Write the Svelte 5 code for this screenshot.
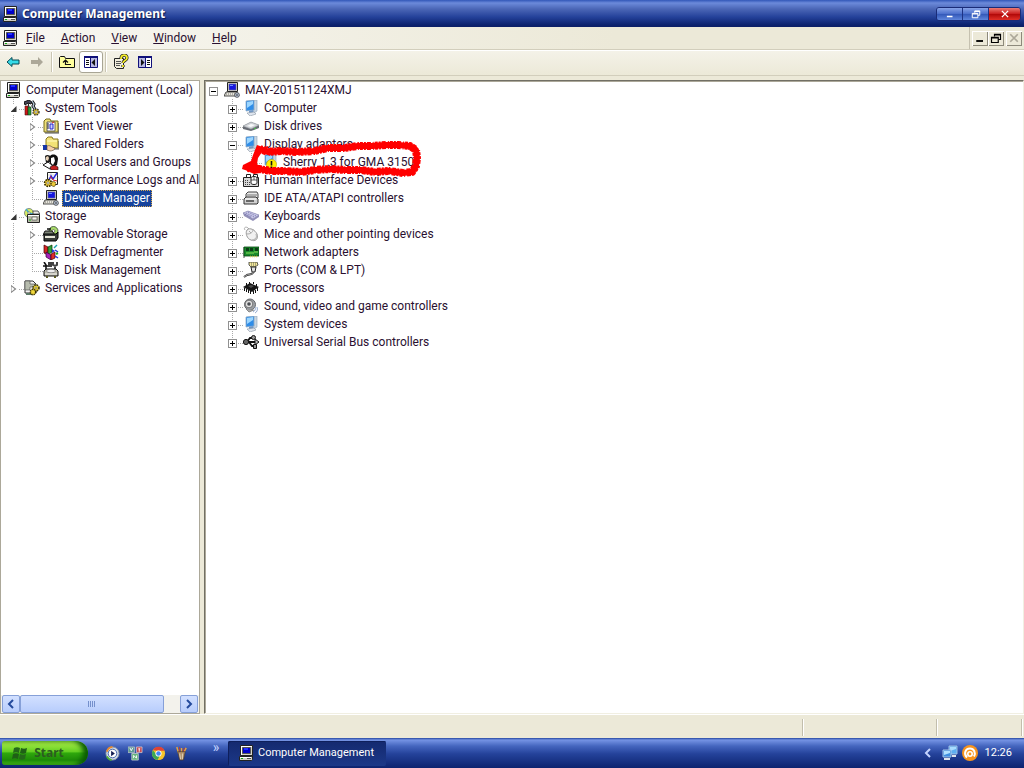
<script>
    const menus = ['File', 'Action', 'View', 'Window', 'Help']

    // guides: one letter per cell. t = branch, l = last branch, v = pass through, space = empty
    const consoleTree = [
        { guides: '', icon: 'pc', label: 'Computer Management (Local)' },
        { guides: 't', toggle: 'open', icon: 'tools', label: 'System Tools' },
        { guides: 'vt', toggle: 'shut', icon: 'event', label: 'Event Viewer' },
        { guides: 'vt', toggle: 'shut', icon: 'folder', label: 'Shared Folders' },
        { guides: 'vt', toggle: 'shut', icon: 'users', label: 'Local Users and Groups' },
        { guides: 'vt', toggle: 'shut', icon: 'perf', label: 'Performance Logs and Al' },
        { guides: 'vl', icon: 'laptop', label: 'Device Manager' },
        { guides: 't', toggle: 'open', icon: 'storage', label: 'Storage' },
        { guides: 'vt', toggle: 'shut', icon: 'removable', label: 'Removable Storage' },
        { guides: 'vt', icon: 'defrag', label: 'Disk Defragmenter' },
        { guides: 'vl', icon: 'diskman', label: 'Disk Management' },
        { guides: 'l', toggle: 'shut', icon: 'services', label: 'Services and Applications' }
    ]

    const deviceTree = [
        { guides: ' ', toggle: 'open', icon: 'laptop', label: 'MAY-20151124XMJ' },
        { guides: ' t', toggle: 'shut', icon: 'monitor', label: 'Computer' },
        { guides: ' t', toggle: 'shut', icon: 'disk', label: 'Disk drives' },
        { guides: ' t', toggle: 'open', icon: 'monitor', label: 'Display adapters' },
        { guides: ' vl', icon: 'warning', label: 'Sherry 1.3 for GMA 3150', marked: true },
        { guides: ' t', toggle: 'shut', icon: 'hid', label: 'Human Interface Devices' },
        { guides: ' t', toggle: 'shut', icon: 'ide', label: 'IDE ATA/ATAPI controllers' },
        { guides: ' t', toggle: 'shut', icon: 'keyboard', label: 'Keyboards' },
        { guides: ' t', toggle: 'shut', icon: 'mouse', label: 'Mice and other pointing devices' },
        { guides: ' t', toggle: 'shut', icon: 'network', label: 'Network adapters' },
        { guides: ' t', toggle: 'shut', icon: 'port', label: 'Ports (COM & LPT)' },
        { guides: ' t', toggle: 'shut', icon: 'cpu', label: 'Processors' },
        { guides: ' t', toggle: 'shut', icon: 'sound', label: 'Sound, video and game controllers' },
        { guides: ' t', toggle: 'shut', icon: 'monitor', label: 'System devices' },
        { guides: ' l', toggle: 'shut', icon: 'usb', label: 'Universal Serial Bus controllers' }
    ]

    const scribble = 'M260 149l8 3 14-1 16 1 16-1 14-3 16 0 14-2 14 0 14-1 12 0 12 1 6 4 1 8-1 8-4 6-9 1-14-2-14 1-14-2-16 0-14-1-16 1-14 2-16-1-14 0-12-2-12-1'

    let selected = $state('Device Manager')
</script>

{#snippet icon(name)}
    <svg class="icon" viewBox="0 0 16 16" aria-hidden="true">
        {#if name === 'pc'}
            <path d="M2.500 .5h12v10h-12z" fill="#d8d5c8" stroke="#222" />
            <path d="M3 1h11v1H4v8H3z" fill="#fff" />
            <path d="M4.500 2.500h8v6h-8z" fill="#0000c8" stroke="#555" />
            <path d="M6 3h4v2H6z" fill="#2030ff" />
            <path d="M1.500 11.500h12l1-1v4l-1 1h-12z" fill="#d0cec4" stroke="#222" />
            <path d="M2 12.500h11" stroke="#fff" />
            <path d="M9 13.500h4" stroke="#555" />
            <path d="M3 13.500h2" stroke="#1a1" />
        {:else if name === 'laptop'}
            <path d="M3.500 .5h10v9h-10z" fill="#d8d5c8" stroke="#222" />
            <path d="M5 2h7v6H5z" fill="#1616e0" stroke="#669" stroke-width=".6" />
            <path d="M6 3h3v1H6z" fill="#6a8cff" />
            <path d="M2 10h11l2 4H0z" fill="#e8e6dc" stroke="#222" stroke-width=".8" />
            <path d="M2 12h9" stroke="#777" stroke-dasharray="1 1" />
            <circle cx="13" cy="13" r="2.4" fill="#b8c4d8" stroke="#333" stroke-width=".7" />
            <path d="M12 13h2" stroke="#333" />
        {:else if name === 'tools'}
            <path d="M1 6h3v9H1z" fill="#d01818" stroke="#411" stroke-width=".6" />
            <path d="M4 7h3v8H4z" fill="#2a9a3a" stroke="#131" stroke-width=".6" />
            <path d="M0 2l5-2 3 2-1 2-3-1-3 2zM4 3l1 4" fill="#445" stroke="#111" />
            <path d="M8 1l2 3-1 2 3 5" fill="none" stroke="#111" stroke-width="3" />
            <path d="M8 1l2 3-1 2 3 5" fill="none" stroke="#bcd" stroke-width="1.2" />
            <circle cx="12" cy="12" r="3" fill="#e5c52a" stroke="#333" stroke-width="1.4" stroke-dasharray="1.5 1" />
            <circle cx="12" cy="12" r="1.2" fill="#fff" stroke="#333" stroke-width=".5" />
        {:else if name === 'event'}
            <path d="M1 3l2-2h4l1 2h7v11H1z" fill="#eee07a" stroke="#756a18" />
            <path d="M4 4h8v9H4z" fill="#fff" stroke="#444" stroke-width=".8" />
            <path d="M4 6h2M4 8h2M4 10h2" stroke="#223" />
            <path d="M7 6h3v5H7z" fill="#ccd2ff" stroke="#22c" />
            <path d="M9 5l2-1" stroke="#d22" />
            <path d="M2 15h14V5" fill="none" stroke="#222" stroke-width=".8" />
        {:else if name === 'folder'}
            <path d="M3 3l2-2h4l1 2h5v9H3z" fill="#f2e276" stroke="#8a7a20" />
            <path d="M4 5h10" stroke="#fffbc0" />
            <path d="M5 13h11V5" fill="none" stroke="#333" stroke-width=".8" />
            <path d="M0 9h4v5H0z" fill="#1434a8" />
            <path d="M4 10c2-1 4 0 5 1l3 1c0 2-3 3-5 3l-3-1z" fill="#f6d0a8" stroke="#543" stroke-width=".6" />
        {:else if name === 'users'}
            <path d="M2 2c2-2 5-1 6 1l-1 5-4 1z" fill="#1c1c1c" />
            <path d="M3 3l2-1 1 2-1 3-2-1z" fill="#e8d2b8" />
            <path d="M7 2c3-3 8-1 8 3l-1 6-3 2-4-3z" fill="#101010" />
            <path d="M8 4l3-1 1 4-2 4-2-2z" fill="#fff" />
            <path d="M0 11l5-3 4 3 1 3-3 1z" fill="#fff" stroke="#111" />
            <path d="M7 13l4-2 4 2v3H8z" fill="#c52222" stroke="#111" stroke-width=".6" />
        {:else if name === 'perf'}
            <path d="M4.500 .5h10v12h-10z" fill="#fff" stroke="#222" />
            <path d="M5 3h10M5 6h10M8 1v12" stroke="#aaa" stroke-width=".5" />
            <path d="M6 8l2-4 2 3 4-6" fill="none" stroke="#2222dd" stroke-width="1.4" />
            <path d="M7 4l3 4 4 1" fill="none" stroke="#d22" />
            <circle cx="5" cy="11" r="3.4" fill="#ecc93a" stroke="#332a00" stroke-width="1.6" stroke-dasharray="1.6 1" />
            <circle cx="10.500" cy="12" r="2.400" fill="#ecc93a" stroke="#332a00" stroke-dasharray="1.4 .8" />
            <circle cx="5" cy="11" r="1.2" fill="#fff" stroke="#332a00" stroke-width=".5" />
        {:else if name === 'storage'}
            <circle cx="5" cy="5" r="4.5" fill="#d9ec62" stroke="#567" stroke-width=".7" />
            <path d="M5 5L2 1M5 5l4 1" stroke="#40a8c8" stroke-width="1.5" />
            <circle cx="5" cy="5" r="1.2" fill="#fff" stroke="#444" stroke-width=".5" />
            <path d="M9 3h5l2 3H9z" fill="#eee" stroke="#333" stroke-width=".8" />
            <path d="M3.500 6.500h12v8h-12z" fill="#b6b5a8" stroke="#222" />
            <path d="M4 7.500h11" stroke="#fff" />
            <path d="M8 9h5v3H8z" fill="#f4f4ec" stroke="#444" stroke-width=".6" />
            <path d="M5 12h2" stroke="#1b1" />
        {:else if name === 'removable'}
            <circle cx="10.500" cy="5" r="4.500" fill="#a8db6a" stroke="#343" stroke-width=".8" />
            <circle cx="10.500" cy="5" r="1.400" fill="#fff" stroke="#333" stroke-width=".6" />
            <path d="M2 5h7l3 4H0z" fill="#7e8578" stroke="#111" />
            <path d="M1 8h12l2-2v6l-2 3H1z" fill="#3b3e3b" stroke="#000" />
            <path d="M2 10h10v2H2z" fill="#e8e8da" />
            <path d="M4 3h4" stroke="#111" stroke-width="1.5" />
        {:else if name === 'defrag'}
            <path d="M1 1l4 2v8l-4-2z" fill="#d62424" stroke="#400" stroke-width=".7" />
            <path d="M5 3l4-2v7L5 11z" fill="#34a03a" stroke="#030" stroke-width=".7" />
            <path d="M3 8l5 3v5l-5-3z" fill="#a422b8" stroke="#303" stroke-width=".7" />
            <path d="M8 10l4-2v6l-4 2z" fill="#e02c2c" stroke="#400" stroke-width=".7" />
            <path d="M9 5l3 2-3 2z" fill="#2434d8" />
            <path d="M11 4l3-3" stroke="#1aa2b0" stroke-width="1.5" />
            <path d="M12 6l3 2M12 12l3 2" stroke="#2434d8" stroke-width="1.5" />
            <path d="M13 10l2-1" stroke="#2a2" stroke-width="2" />
        {:else if name === 'diskman'}
            <path d="M1 0l2 3v4M0 4h5M6 0v5M8 0v5" fill="none" stroke="#111" stroke-width="1.600" />
            <path d="M10 0v3l2 1 2-1V0M12 4v4" fill="none" stroke="#444" stroke-width="2" />
            <path d="M3 7h10l2 2v5H1V9z" fill="#b9b8aa" stroke="#111" />
            <ellipse cx="8" cy="9" rx="4.500" ry="1.800" fill="#eee" stroke="#555" stroke-width=".6" />
            <path d="M2 12h12" stroke="#f4f4f0" />
            <path d="M3 14h2v2H3zM11 14h2v2h-2z" fill="#5a5a20" />
        {:else if name === 'services'}
            <path d="M1 1h8l3 3v9H1z" fill="#f4f4f4" stroke="#333" />
            <path d="M1 1h5v3h5v3H6v3H1z" fill="#b7bcae" stroke="#444" stroke-width=".6" />
            <path d="M2 13h6v2H2z" fill="#5c7a68" />
            <circle cx="12" cy="8" r="3" fill="#f2d93c" stroke="#3d3400" stroke-width="1.600" stroke-dasharray="1.500 .9" />
            <circle cx="9" cy="12" r="2.700" fill="#f2d93c" stroke="#3d3400" stroke-width="1.500" stroke-dasharray="1.400 .8" />
            <circle cx="12" cy="8" r="1" fill="#fff" stroke="#3d3400" stroke-width=".5" />
        {:else if name === 'monitor' || name === 'warning'}
            <path d="M10 1l4-1v11l-3 2z" fill="#c9d6e2" stroke="#8fa3b6" stroke-width=".6" />
            <path d="M3 1l8-1v10l-8 1z" fill="#2f8de8" stroke="#8ea8c4" stroke-width=".8" />
            <path d="M4 2l6-1v3L4 8z" fill="#9cd6ff" />
            <path d="M6 11l4-1 1 3H6z" fill="#6f98c8" />
            <path d="M4 13l7-1 2 2-6 2z" fill="#dfe5ee" stroke="#8b97a5" stroke-width=".6" />
            {#if name === 'warning'}
                <circle cx="9.500" cy="10.500" r="5" fill="#ffee00" stroke="#c8b400" stroke-width=".7" />
                <path d="M9.500 7v4.500M9.500 12.500v1.500" stroke="#111" stroke-width="1.600" />
            {/if}
        {:else if name === 'disk'}
            <path d="M0 8l8-4 8 3v3l-8 3-8-2z" fill="#686c74" />
            <path d="M0 8l8-4 8 3-8 4z" fill="#d0d3d7" stroke="#9a9fa5" stroke-width=".6" />
            <path d="M4 8l4-2 4 1-4 2z" fill="#f9fafb" />
            <path d="M11 11l2-1" stroke="#42cc42" />
        {:else if name === 'hid'}
            <path d="M.5 5.500h15v9H.5z" fill="#d8d8d8" stroke="#222" />
            <path d="M2 8.500h4M2 10.500h5M2 12.500h5" stroke="#444" stroke-dasharray="1 1" />
            <path d="M3.500 6V2.500h4V5" fill="none" stroke="#222" />
            <path d="M8 6c0-2 6-2 6 0v5c0 2-6 2-6 0z" fill="#fff" stroke="#222" />
            <path d="M8 8h6M11 5v3" stroke="#222" stroke-width=".7" />
            <path d="M10.500 4V2.500h4V6" fill="none" stroke="#222" />
        {:else if name === 'ide'}
            <path d="M3 4l2-2h9l1 2v4H3z" fill="#e7e7e7" stroke="#444" />
            <path d="M4 5h10" stroke="#777" />
            <path d="M1 9l2-2h10l2 2v4l-1 1H1z" fill="#d0d0d0" stroke="#333" />
            <path d="M2 9h11" stroke="#fff" />
            <path d="M3 11h8" stroke="#444" stroke-width="1.500" />
        {:else if name === 'keyboard'}
            <path d="M0 5l5-2 11 4v2l-6 4-9-5z" fill="#9290b8" />
            <path d="M0 5l5-2 11 4-6 4z" fill="#c9c8e8" stroke="#8886b0" stroke-width=".6" />
            <path d="M3 5l8 4M5 4l8 4M2 6l6 3" stroke="#7674ac" stroke-dasharray="1 1" />
        {:else if name === 'mouse'}
            <path d="M2 4C0 1 4 0 6 3" fill="none" stroke="#aaa" />
            <path d="M4 4c3-3 8 0 10 4 2 5-2 8-6 6-4-1-6-7-4-10z" fill="#f1f1f1" stroke="#999" />
            <path d="M4 8c3 0 6-1 6-5M6 5l2 2" fill="none" stroke="#aaa" />
            <path d="M13 8c2 4-1 6-4 6" fill="none" stroke="#bbb" stroke-width="1.500" />
        {:else if name === 'network'}
            <path d="M1 3v11" stroke="#888" stroke-width="1.500" />
            <path d="M1 3h15v9H1z" fill="#1a8a2c" stroke="#064410" stroke-width=".8" />
            <path d="M3 4h3v3H3zM7 4h3v3H7zM12 4h3v3h-3z" fill="#0b3d16" />
            <path d="M3 9h8M11 8h4" stroke="#8be05a" />
            <path d="M7 12.500h8" stroke="#d4c84a" stroke-width="1.500" stroke-dasharray="1 1" />
        {:else if name === 'port'}
            <path d="M6 0h8l1 3-3 2H8L6 3z" fill="#f4e99a" stroke="#333" stroke-width=".8" />
            <path d="M8 1h5M8 3h5" stroke="#665" stroke-dasharray="1 1" />
            <path d="M8 5h5l-1 5H9z" fill="#e2e2e2" stroke="#222" />
            <path d="M10 10c0 3-4 2-6 3l-3 2" fill="none" stroke="#222" stroke-width="2" />
            <path d="M10 10c0 3-4 2-6 3l-3 2" fill="none" stroke="#ddd" stroke-width=".7" />
        {:else if name === 'cpu'}
            <path d="M0 7l7-4 9 4-7 5z" fill="#161616" />
            <path d="M1.500 8v3M3.500 9v3M5.500 10v3M7.500 11v3M10.500 11v3M12.500 10v3M14.500 8v3M3.500 3v3M6.500 2v2M10.500 2v2M13.500 4v2" stroke="#111" />
            <path d="M5 6l3-1 3 1-3 2z" fill="#4b4b4b" />
        {:else if name === 'sound'}
            <circle cx="7" cy="6.500" r="5.500" fill="#9c9fa3" stroke="#66686c" />
            <path d="M3 11l3 3 5-2" fill="#aaa" stroke="#777" stroke-width=".8" />
            <circle cx="6" cy="6" r="3.800" fill="#e2e2e2" stroke="#555" stroke-width=".7" />
            <circle cx="6" cy="6" r="1.800" fill="#4a4d52" />
            <path d="M12 9c1 2 0 4-2 5M14 9c1 3 0 5-2 6" fill="none" stroke="#91a9cf" />
        {:else if name === 'usb'}
            <path d="M2 8h11M4 8l3-4h3M6 8l3 4h3" fill="none" stroke="#111" stroke-width="1.800" />
            <circle cx="3" cy="8" r="2.600" fill="#666" stroke="#111" />
            <path d="M12 5l4 3-4 3z" fill="#bbb" stroke="#111" />
            <circle cx="10.500" cy="3.500" r="2" fill="#999" stroke="#111" />
            <path d="M10.500 10.500h3v4h-3z" fill="#999" stroke="#111" />
        {:else if name === 'back'}
            <path d="M2 8l5-4.500V6h7v4H7v2.500z" fill="#35dbe8" stroke="#064a54" />
        {:else if name === 'forward'}
            <path d="M14 8L9 3v3H2v4h7v3z" fill="#aca899" />
        {:else if name === 'up'}
            <path d="M.5 3.500l1-1h4l1 2h9v9H.5z" fill="#ffff9c" stroke="#111" />
            <path d="M6.500 11V7M4 8.500L6.500 6 9 8.500M6 10.500h6" fill="none" stroke="#111" stroke-width="1.200" />
        {:else if name === 'treeview' || name === 'actions'}
            <path d="M1.500 3.500h13v10h-13z" fill="#fff" stroke="#10107a" />
            <path d="M1 3h14" stroke="#10107a" stroke-width="2" />
            {#if name === 'treeview'}
                <path d="M8 4h6v9H8z" fill="#b9b9e2" />
                <path d="M7.500 4v10" stroke="#10107a" />
                <path d="M3 6.500h3M3 8.500h3M3 10.500h3" stroke="#111" />
                <path d="M12 5v7L8.500 8.500z" fill="#111" />
            {:else}
                <path d="M2 4h6v9H2z" fill="#b9b9e2" />
                <path d="M8.500 4v10" stroke="#10107a" />
                <path d="M10 6.500h3M10 8.500h3M10 10.500h3" stroke="#111" />
                <path d="M4 5v7l3.500-3.500z" fill="#111" />
            {/if}
        {:else if name === 'help'}
            <path d="M1.500 4.500h9v10h-7l-2-2z" fill="#f1eddc" stroke="#222" />
            <path d="M3 7.500h5M3 9.500h5M3 11.500h4" stroke="#555" />
            <path d="M8 5c0-5 6-5 6-1 0 3-4 2-4 5M10 11v2" fill="none" stroke="#222" stroke-width="3.200" />
            <path d="M8 5c0-5 6-5 6-1 0 3-4 2-4 5M10 11v2" fill="none" stroke="#f6ee28" stroke-width="1.800" />
        {:else if name === 'player'}
            <circle cx="8" cy="8" r="7" fill="#d5dce6" stroke="#8391a8" />
            <path d="M2 6a7 7 0 0 1 6-5" fill="none" stroke="#e8892c" stroke-width="2" />
            <path d="M2 11a7 7 0 0 0 5 4" fill="none" stroke="#4fae3a" stroke-width="2" />
            <circle cx="8" cy="8" r="4.600" fill="#fff" stroke="#3a5fa8" />
            <path d="M6.500 5l4 3-4 3z" fill="#111c50" />
        {:else if name === 'keys'}
            <path d="M0 1h7v6H0z" fill="#5d9a96" stroke="#ccc" stroke-width=".7" />
            <path d="M9 1h6v6H9z" fill="#c94a52" stroke="#ddd" stroke-width=".7" />
            <path d="M4 8h7v7H4z" fill="#65b47c" stroke="#ddd" stroke-width=".7" />
            <path d="M2 2l1.500 3L5 2M11 3h2M12 3v3M6 13v-3l3 3v-3" fill="none" stroke="#fff" />
        {:else if name === 'chrome'}
            <circle cx="8" cy="8" r="7" fill="#f6c52b" />
            <path d="M2 4.500A7 7 0 0 1 14.500 5H8z" fill="#df4335" />
            <path d="M2 4.500A7 7 0 0 0 7 15l3-6-5-1z" fill="#3ba757" />
            <circle cx="8" cy="8" r="3.300" fill="#fff" />
            <circle cx="8" cy="8" r="2.400" fill="#4285f4" />
        {:else if name === 'brushes'}
            <path d="M5 8L3 1M8 8V2M10 8l3-6" stroke="#e7a33b" stroke-width="1.600" />
            <path d="M6 8V1M9 8l2-6" stroke="#c53b2a" />
            <path d="M4 6h8l-2 9H6z" fill="#b0916c" stroke="#4a3a2c" stroke-width=".7" />
            <path d="M6 8l1 6M9 8v6" stroke="#e0d2ba" />
        {:else if name === 'lan'}
            <path d="M7 1h8v8H7z" fill="#5daef0" stroke="#9fc0e4" />
            <path d="M8 2h6v2L8 6z" fill="#a8dcff" />
            <path d="M1 5h8v7H1z" fill="#3f8fe0" stroke="#a5c5e8" />
            <path d="M2 6h6v2l-6 2z" fill="#b2e2ff" />
            <path d="M2 13h6v2H2zM10 10h4v2h-4z" fill="#dfe4ec" />
        {:else if name === 'avast'}
            <circle cx="8" cy="8" r="8" fill="#f7941d" />
            <path d="M5 12.500C1.500 9 3 3.500 8 3.500c4 0 6 4 4 8" fill="none" stroke="#fff" stroke-width="2" />
            <circle cx="8" cy="9" r="2.200" fill="#f7941d" stroke="#fff" stroke-width="1.600" />
        {:else if name === 'flag'}
            <path d="M2 3c2-1 4-1 6 0L7 8C5 7 3 7 1 8z" fill="#24691a" />
            <path d="M9 3c2 1 4 1 6 0l-1 5c-2 1-4 1-6 0z" fill="#1f6016" />
            <path d="M1 9c2-1 4-1 6 0l-1 5c-2-1-4-1-6 0z" fill="#1f6016" />
            <path d="M8 9c2 1 4 1 6 0l-1 5c-2 1-4 1-6 0z" fill="#24691a" />
        {:else if name === 'minimize'}
            <path d="M3 12h9" stroke="currentColor" stroke-width="2.500" />
        {:else if name === 'restore'}
            <path d="M6 6V3h8v7h-3M6 4h8" fill="none" stroke="currentColor" stroke-width="1.600" />
            <path d="M2 7h9v7H2zM2 8h9" fill="none" stroke="currentColor" stroke-width="1.600" />
        {:else if name === 'close'}
            <path d="M3 3l10 10M13 3L3 13" stroke="currentColor" stroke-width="2.200" />
        {:else if name === 'left'}
            <path d="M10 4L6 8l4 4" fill="none" stroke="currentColor" stroke-width="2" />
        {:else if name === 'right'}
            <path d="M6 4l4 4-4 4" fill="none" stroke="currentColor" stroke-width="2" />
        {/if}
    </svg>
{/snippet}

{#snippet tree(rows, kind)}
    <ul class="tree {kind}">
        {#each rows as row}
            <li>
                {#each row.guides as guide, i}
                    <span class="cell" class:branch={guide === 't'} class:last={guide === 'l'} class:pass={guide === 'v'}>
                        {#if row.toggle && i === row.guides.length - 1}
                            <button class="toggle {row.toggle}" aria-label="Toggle {row.label}"></button>
                        {/if}
                    </span>
                {/each}
                {@render icon(row.icon)}
                <button class="label" class:selected={selected === row.label} onclick={() => (selected = row.label)}>{row.label}</button>
                {#if row.marked}
                    <svg class="marker" viewBox="238 138 190 44" aria-hidden="true">
                        <path class="ink" d={scribble} />
                        <path class="ink rough" d={scribble} />
                        <path d="M257 145l6 2-1 5-4 6-1 6 4 3-1 6-6 1-6-3-6-2 1-4 8-4 2-6 2-5z" fill="#f00" />
                        <path d="M262 149l6-2M266 151l5-3M270 153l4-4" stroke="#f00" stroke-width="2" />
                    </svg>
                {/if}
            </li>
        {/each}
    </ul>
{/snippet}

<div class="desktop">
    <header class="titlebar">
        {@render icon('pc')}
        <h1>Computer Management</h1>
        <div class="winbtns">
            <button aria-label="Minimize">{@render icon('minimize')}</button>
            <button aria-label="Restore">{@render icon('restore')}</button>
            <button class="red" aria-label="Close">{@render icon('close')}</button>
        </div>
    </header>

    <nav class="menubar">
        {@render icon('pc')}
        {#each menus as menu}
            <button class="menu"><u>{menu[0]}</u>{menu.slice(1)}</button>
        {/each}
        <div class="childbtns">
            <button aria-label="Minimize child window">{@render icon('minimize')}</button>
            <button aria-label="Restore child window">{@render icon('restore')}</button>
            <button class="off" aria-label="Close child window" disabled>{@render icon('close')}</button>
        </div>
    </nav>

    <div class="toolbar">
        <button aria-label="Back">{@render icon('back')}</button>
        <button aria-label="Forward" disabled>{@render icon('forward')}</button>
        <span class="sep"></span>
        <button aria-label="Up one level">{@render icon('up')}</button>
        <button class="pressed" aria-label="Show/Hide console tree">{@render icon('treeview')}</button>
        <span class="sep"></span>
        <button aria-label="Help">{@render icon('help')}</button>
        <button aria-label="Show/Hide action pane">{@render icon('actions')}</button>
    </div>

    <main>
        <section class="pane side">
            {@render tree(consoleTree, 'arrows')}
            <div class="scrollbar">
                <button aria-label="Scroll left">{@render icon('left')}</button>
                <div class="track"><div class="thumb"><i></i></div></div>
                <button aria-label="Scroll right">{@render icon('right')}</button>
            </div>
        </section>
        <section class="pane devices">
            {@render tree(deviceTree, 'boxes')}
        </section>
    </main>

    <div class="status"><span></span><span></span><span></span></div>

    <footer class="taskbar">
        <button class="start">{@render icon('flag')}Start</button>
        <div class="quick">
            <button aria-label="Media player">{@render icon('player')}</button>
            <button aria-label="Keyboard layout">{@render icon('keys')}</button>
            <button aria-label="Browser">{@render icon('chrome')}</button>
            <button aria-label="Paint">{@render icon('brushes')}</button>
        </div>
        <button class="more" aria-label="More">»</button>
        <button class="task">{@render icon('pc')}Computer Management</button>
        <div class="tray">
            <button class="expand" aria-label="Show hidden icons">{@render icon('left')}</button>
            <button aria-label="Network">{@render icon('lan')}</button>
            <button aria-label="Antivirus">{@render icon('avast')}</button>
            <time>12:26</time>
        </div>
    </footer>
</div>

<style>
    :global(body) {
        margin: 0;
    }

    .desktop {
        display: flex;
        flex-direction: column;
        height: 100vh;
        overflow: hidden;
        background: #ece9d8;
        color: #2a1030;
        font: 12px/18px Tahoma, Roboto, sans-serif;
        user-select: none;
    }

    button {
        display: flex;
        align-items: center;
        justify-content: center;
        padding: 0;
        border: 0;
        background: none;
        color: inherit;
        font: inherit;
    }

    .icon {
        width: 16px;
        height: 16px;
        flex: none;
        display: block;
    }

    .titlebar {
        display: flex;
        align-items: center;
        gap: 4px;
        height: 27px;
        padding: 0 3px 0 2px;
        box-sizing: border-box;
        background: linear-gradient(#3257b8 0, #6c8ada 3px, #4b66b6 9px, #24419a 17px, #0c226e 25px, #0c1f66 100%);
        color: #fff;
    }

    h1 {
        margin: 0;
        font: bold 12px/18px Tahoma, "Noto Sans", sans-serif;
        text-shadow: 1px 1px 1px #0a1a50;
    }

    .winbtns {
        display: flex;
        margin-left: auto;
        border: 1px solid #1a2c78;
        border-radius: 3px;
        overflow: hidden;
    }

    .winbtns button {
        width: 26px;
        height: 12px;
        border-right: 1px solid #1d3384;
        background: linear-gradient(#87a3e8, #4a6ecb 50%, #3358b8 51%, #5f86dc);
    }

    .winbtns button.red {
        width: 31px;
        border: 0;
        background: linear-gradient(#ec7a72, #c81c1c 50%, #b00808 51%, #e03028);
    }

    .winbtns .icon {
        width: 12px;
        height: 10px;
    }

    .menubar {
        display: flex;
        align-items: center;
        height: 22px;
        padding-left: 2px;
        border-bottom: 1px solid #d2cebc;
        background: linear-gradient(90deg, #f8f7f2, #ece9d8 60%);
    }

    .menu {
        margin-left: 16px;
    }

    .menubar > .icon + .menu {
        margin-left: 8px;
    }

    .childbtns {
        display: flex;
        align-items: center;
        height: 100%;
        margin-left: auto;
        padding: 0 2px;
        border-left: 1px solid #c5c1b0;
    }

    .childbtns button {
        width: 16px;
        height: 15px;
        background: #ece9d8;
        box-shadow: inset 1px 1px #fff, inset -1px -1px #8d8a7b;
        color: #000;
    }

    .childbtns button.off {
        margin-left: 2px;
        color: #aca899;
    }

    .childbtns .icon {
        width: 12px;
        height: 12px;
    }

    .toolbar {
        display: flex;
        align-items: center;
        height: 22px;
        padding: 0 0 2px 1px;
        border-top: 1px solid #fff;
        border-bottom: 1px solid #d2cebc;
        background: linear-gradient(#f4f2e8, #ece9d8);
    }

    .toolbar button {
        width: 24px;
        height: 22px;
    }

    .toolbar .pressed {
        box-sizing: border-box;
        border: 1px solid #a8a595;
        border-radius: 3px;
        background: #fff;
    }

    .sep {
        width: 1px;
        height: 20px;
        margin: 0 3px 0 2px;
        background: #c9c5b3;
        box-shadow: 1px 0 #fff;
    }

    main {
        display: flex;
        flex: 1;
        min-height: 0;
        gap: 4px;
        margin-top: 4px;
    }

    .pane {
        display: flex;
        flex-direction: column;
        box-sizing: border-box;
        min-width: 0;
        overflow: hidden;
        background: #fff;
    }

    .side {
        flex: 0 0 200px;
        border: 1px solid #aca899;
    }

    .devices {
        flex: 1;
        border: 1px solid #716f64;
        border-right-color: #f1efe2;
        border-bottom-color: #f1efe2;
        box-shadow: inset 1px 1px #aca899;
    }

    .tree {
        flex: 1;
        margin: 0;
        padding: 0;
        list-style: none;
        overflow: hidden;
    }

    .arrows {
        padding-left: 4px;
    }

    li {
        display: flex;
        align-items: center;
        height: 18px;
        position: relative;
    }

    .cell {
        flex: none;
        display: flex;
        align-items: center;
        justify-content: center;
        width: 19px;
        height: 18px;
        box-sizing: border-box;
        padding: 2px 2px 0 0;
        background-repeat: no-repeat;
    }

    .pass, .branch, .last {
        --v: repeating-linear-gradient(#aaa 0 1px, transparent 1px 2px);
        --h: repeating-linear-gradient(90deg, #aaa 0 1px, transparent 1px 2px);
    }

    .pass {
        background-image: var(--v);
        background-position: 8px 0;
        background-size: 1px 100%;
    }

    .branch {
        background-image: var(--v), var(--h);
        background-position: 8px 0, 8px 10px;
        background-size: 1px 100%, 11px 1px;
    }

    .last {
        background-image: var(--v), var(--h);
        background-position: 8px 0, 8px 10px;
        background-size: 1px 10px, 11px 1px;
    }

    .toggle {
        width: 9px;
        height: 9px;
        box-sizing: border-box;
        background: #fff;
    }

    .boxes .toggle {
        border: 1px solid #919191;
        background: linear-gradient(#000, #000) center / 5px 1px no-repeat, #fff;
    }

    .boxes .toggle.shut {
        background: linear-gradient(#000, #000) center / 5px 1px no-repeat, linear-gradient(#000, #000) center / 1px 5px no-repeat, #fff;
    }

    .arrows .toggle::before {
        content: '';
        width: 6px;
        height: 9px;
        background: #888;
        clip-path: polygon(0 0, 100% 50%, 0 100%, 0 0, 1px 2px, 1px 7px, 4px 50%, 1px 2px);
    }

    .arrows .toggle.open::before {
        height: 6px;
        background: #333;
        clip-path: polygon(100% 0, 100% 100%, 0 100%);
    }

    .label {
        margin-left: 3px;
        padding: 0 2px;
        line-height: 17px;
        white-space: nowrap;
    }

    .label.selected {
        background: #16439c;
        color: #fff;
        outline: 1px dotted #d8a850;
        outline-offset: -1px;
    }

    .marker {
        position: absolute;
        left: 33px;
        top: -15px;
        width: 190px;
        height: 44px;
        pointer-events: none;
    }

    .ink {
        fill: none;
        stroke: #f00;
        stroke-width: 6px;
        stroke-linejoin: round;
    }

    .rough {
        stroke-width: 8px;
        stroke-dasharray: 2 1 4 2 1 1 3 1;
    }

    .scrollbar {
        display: flex;
        height: 18px;
        padding: 0 1px;
        background: #f3f2ec;
    }

    .scrollbar button, .thumb {
        box-sizing: border-box;
        border: 1px solid #86a0d8;
        border-radius: 2px;
        background: linear-gradient(#d2e0ff, #b8cdfc);
        color: #234a9c;
    }

    .scrollbar button {
        width: 18px;
    }

    .track {
        flex: 1;
    }

    .thumb {
        display: flex;
        align-items: center;
        justify-content: center;
        width: 90%;
        height: 100%;
    }

    .thumb i {
        width: 8px;
        height: 6px;
        background: repeating-linear-gradient(90deg, #7590cc 0 1px, transparent 1px 2px);
    }

    .status {
        display: flex;
        height: 24px;
        box-sizing: border-box;
        padding: 4px 2px 2px 0;
        border-top: 1px solid #fff;
    }

    .status span {
        width: 84px;
        border-right: 1px solid #c2beac;
        box-shadow: 1px 0 #fff;
    }

    .status span:first-child {
        flex: 1;
    }

    .status span:nth-child(2) {
        width: 133px;
    }

    .taskbar {
        display: flex;
        align-items: center;
        height: 30px;
        background: linear-gradient(#24469f 0, #7593e4 2px, #4566bf 8px, #24429a 16px, #0d236f 100%);
        color: #fff;
    }

    .start {
        gap: 6px;
        width: 86px;
        height: 24px;
        margin-left: 2px;
        padding-right: 14px;
        box-sizing: border-box;
        border-radius: 3px 12px 12px 3px;
        background: linear-gradient(#b4f04c, #63cf22 45%, #2fa80c 50%, #1d8a08 80%, #55cf20);
        box-shadow: inset -5px 0 5px #0b5c04;
        color: #2c5c20;
        font: bold 12px/18px Tahoma, "Noto Sans", sans-serif;
    }

    .quick {
        display: flex;
        gap: 8px;
        margin-left: 17px;
    }

    .quick .icon {
        width: 15px;
        height: 15px;
    }

    .more {
        align-self: flex-start;
        width: 10px;
        margin-left: 22px;
        font-size: 14px;
        color: #c4d4ff;
    }

    .task {
        justify-content: flex-start;
        gap: 4px;
        width: 158px;
        height: 25px;
        margin-left: 7px;
        padding-left: 10px;
        box-sizing: border-box;
        border-radius: 2px;
        background: linear-gradient(#14296f, #1c3888);
        box-shadow: inset 1px 1px #0e1f5c;
        font-size: 11px;
        white-space: nowrap;
    }

    .tray {
        display: flex;
        align-items: center;
        gap: 4px;
        margin-left: auto;
        padding-right: 12px;
        font-size: 11px;
    }

    .tray .expand {
        color: #c4d4ff;
        margin-right: 2px;
    }

    .tray time {
        margin-left: 3px;
    }
</style>
